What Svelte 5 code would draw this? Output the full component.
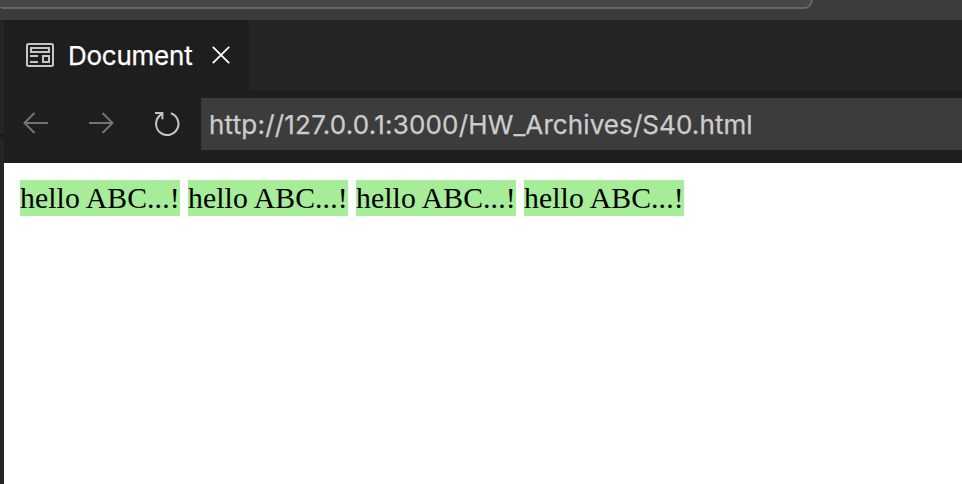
<script>
  const greetings = Array(4).fill('hello ABC...!');
</script>

<div class="window">
  <div class="titlebar"><div class="search"></div></div>
  <div class="body">
    <div class="rail"><div class="rail-top"></div></div>
    <main>
      <div class="tabs">
        <div class="tab">
          <svg class="page-icon" width="28" height="24" viewBox="0 0 28 24" fill="none" stroke="#c5c5c5" stroke-width="2">
            <rect x="1" y="1" width="26" height="22" rx="1.5" />
            <rect x="5" y="5" width="18" height="4" />
            <path d="M4 13h8M4 19h8" />
            <rect x="17" y="13" width="6" height="6" />
          </svg>
          <span class="title">Document</span>
          <svg class="close" width="18" height="18" viewBox="0 0 18 18" fill="none" stroke="#fff" stroke-width="1.8">
            <path d="M.8.8l16.4 16.4M17.2.8.8 17.2" />
          </svg>
        </div>
      </div>
      <nav>
        <svg class="back" width="26" height="22" viewBox="0 0 26 22" fill="none" stroke="#747474" stroke-width="2">
          <path d="M11.5 1 1.5 11l10 10M1.5 11H25" />
        </svg>
        <svg class="forward" width="26" height="22" viewBox="0 0 26 22" fill="none" stroke="#747474" stroke-width="2">
          <path d="M14.5 1l10 10-10 10M24.5 11H1" />
        </svg>
        <svg class="reload" width="26" height="26" viewBox="0 0 26 26" fill="none" stroke="#c5c5c5" stroke-width="2">
          <path d="M17 3.3A11.2 11.2 0 1 1 5.3 6L8.4 3.2M1 3H8.4V9.3" />
        </svg>
        <div class="address"><span class="host">http://127.0.0.1:3000/</span><span class="path">HW_Archives/S40.html</span></div>
      </nav>
      <div class="document">
        {#each greetings as text}<span>{text}</span>{/each}
      </div>
    </main>
  </div>
</div>

<style>
  :global(body) { margin: 0; overflow: hidden; }
  .window { width: 962px; height: 484px; overflow: hidden; background: #1e1e1e; }
  .titlebar { height: 20px; background: #3c3c3c; }
  .search {
    box-sizing: border-box; width: 813px; height: 9px;
    background: #474747; border: 2px solid #676767;
    border-width: 0 2px 2px 0; border-radius: 0 0 11px 3px;
  }
  .body { display: flex; height: 464px; }
  .rail { width: 4px; background: #252525; }
  .rail-top { height: 114px; border-bottom: 3px solid #191919; }
  main { flex: 1; display: flex; flex-direction: column; min-width: 0; }
  .tabs { height: 70px; background: #252525; }
  .tab {
    box-sizing: border-box; width: 245px; height: 70px; padding-left: 22px;
    display: flex; align-items: center; background: #1e1e1e;
  }
  svg { display: block; flex: none; }
  .title {
    width: 125px; margin-left: 14px; white-space: nowrap; color: #fff;
    font: 26px/32px Inter, sans-serif; letter-spacing: -.25px; padding-top: 2px;
    -webkit-text-stroke: .25px #fff;
  }
  .close { margin-left: 19px; }
  nav { height: 73px; display: flex; align-items: flex-start; background: #1e1e1e; }
  .back { margin: 22px 0 0 19px; }
  .forward { margin: 22px 0 0 39px; }
  .reload { margin: 20px 0 0 40px; }
  .address {
    box-sizing: border-box; flex: 1; height: 52px; margin: 8px 0 0 21px; padding: 1px 0 0 8px;
    background: #3c3c3c; color: #ccc; font: 26px/52px Inter, sans-serif; white-space: nowrap;
    -webkit-text-stroke: .25px #ccc;
  }
  .host { letter-spacing: .2px; }
  .path { letter-spacing: .09px; }
  .document {
    flex: 1; display: flex; align-items: flex-start; gap: 8px; padding: 17px 16px;
    background: #fff; color: #000; font: 29.7px/36px "Liberation Serif", serif;
  }
  .document span { width: 160px; height: 36px; background: #a6ec99; white-space: nowrap; letter-spacing: .1px; }
</style>
